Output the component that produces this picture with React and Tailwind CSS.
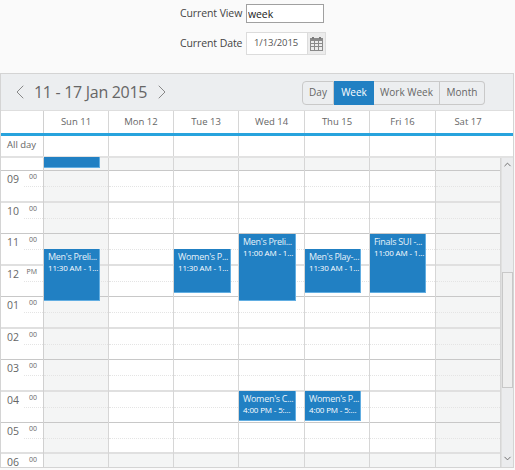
import { ChevronLeft, ChevronRight, ChevronUp, ChevronDown } from 'lucide-react';

const days = ['Sun 11', 'Mon 12', 'Tue 13', 'Wed 14', 'Thu 15', 'Fri 16', 'Sat 17'];
const dayWidths = ['w-[65px]', 'w-[65px]', 'w-[65px]', 'w-[66px]', 'w-[65px]', 'w-[66px]', 'w-[65px]'];

// hour rows below the partial first one; thick = the lighter double line at the bottom
const hours = [
  { label: '09', min: '00', h: 'h-[32px]', thick: true },
  { label: '10', min: '00', h: 'h-[31px]', thick: false },
  { label: '11', min: '00', h: 'h-[32px]', thick: true },
  { label: '12', min: 'PM', h: 'h-[31px]', thick: false },
  { label: '01', min: '00', h: 'h-[32px]', thick: true },
  { label: '02', min: '00', h: 'h-[31px]', thick: false },
  { label: '03', min: '00', h: 'h-[32px]', thick: true },
  { label: '04', min: '00', h: 'h-[31px]', thick: false },
  { label: '05', min: '00', h: 'h-[31px]', thick: true },
];

const events = {
  0: [
    { title: 'Men\'s Preli...', time: '11:30 AM - 1...', pos: 'top-[91px] h-[52px] left-0 w-[56px]' },
    { title: '', time: '', pos: 'top-[-1px] h-[11px] left-0 w-[56px]' },
  ],
  2: [{ title: 'Women\'s P...', time: '11:30 AM - 1...', pos: 'top-[91px] h-[44px] left-0 w-[57px]' }],
  3: [
    { title: 'Men\'s Preli...', time: '11:00 AM - 1...', pos: 'top-[76px] h-[67px] left-0 w-[57px]' },
    { title: 'Women\'s C...', time: '4:00 PM - 5:...', pos: 'top-[233px] h-[30px] left-0 w-[57px]' },
  ],
  4: [
    { title: 'Men\'s Play-...', time: '11:30 AM - 1...', pos: 'top-[91px] h-[44px] left-0 w-[56px]' },
    { title: 'Women\'s P...', time: '4:00 PM - 5:...', pos: 'top-[233px] h-[30px] left-0 w-[56px]' },
  ],
  5: [{ title: 'Finals SUI -...', time: '11:00 AM - 1...', pos: 'top-[76px] h-[59px] left-0 w-[56px]' }],
};

function Event({ title, time, pos }) {
  return (
    <div className={`absolute ${pos} bg-[#2180c3] border-r border-b border-[#62aee2] pl-[4px] pt-[2px] text-white overflow-hidden whitespace-nowrap`}>
      {title && <div className="text-[9px] leading-[12px] tracking-[-0.3px] text-[#e6f2fa]">{title}</div>}
      {time && <div className="mt-[-1px] text-[8px] leading-[12px] tracking-[-0.15px]">{time}</div>}
    </div>
  );
}

function CalendarIcon() {
  return (
    <svg width="13" height="14" viewBox="0 0 13 14" fill="#7b7b7b">
      <rect x="0" y="1" width="13" height="13" fill="#8a8a8a" />
      <rect x="2" y="0" width="2" height="2" />
      <rect x="9" y="0" width="2" height="2" />
      <g fill="#ececec">
        <rect x="1" y="4" width="3" height="2" />
        <rect x="5" y="4" width="3" height="2" />
        <rect x="9" y="4" width="3" height="2" />
        <rect x="1" y="7" width="3" height="2" />
        <rect x="5" y="7" width="3" height="2" />
        <rect x="9" y="7" width="3" height="2" />
        <rect x="1" y="10" width="3" height="3" />
        <rect x="5" y="10" width="3" height="3" />
        <rect x="9" y="10" width="3" height="3" />
      </g>
    </svg>
  );
}

export default function App() {
  return (
    <div className="w-[515px] h-[470px] bg-[#fafafa] overflow-hidden text-[#555] font-['Open_Sans',sans-serif]">
      {/* options above the scheduler */}
      <div className="h-[73px] pl-[180px] pt-[4px] text-[10.5px] tracking-[-0.1px] text-[#444]">
        <div className="flex items-center h-[19px]">
          <span className="w-[66px] whitespace-nowrap">Current View</span>
          <input
            readOnly
            value="week"
            className="w-[78px] h-[19px] bg-white border border-[#a0a0a0] px-[1px] text-[10.5px] text-[#222] outline-none"
          />
        </div>
        <div className="flex items-center h-[23px] mt-[9px]">
          <span className="w-[66px] whitespace-nowrap">Current Date</span>
          <div className="flex h-[23px] border border-[#dcdcdc] bg-white">
            <span className="w-[60px] flex items-center pl-[7px] text-[#555] text-[9.5px]">1/13/2015</span>
            <span className="w-[18px] bg-[#ececec] border-l border-[#dcdcdc] flex items-center justify-center">
              <CalendarIcon />
            </span>
          </div>
        </div>
      </div>

      <div className="w-[514px] h-[395px] border border-[#d4d4d4] bg-white overflow-hidden">
        {/* toolbar */}
        <div className="h-[37px] bg-[#eceef0] border-b border-[#dedede] flex items-center justify-between pl-[7px] pr-[28px]">
          <div className="flex items-center text-[#666]">
            <ChevronLeft size={24} strokeWidth={1} className="text-[#888]" />
            <span className="ml-[2px] text-[16px] leading-none tracking-[-0.3px] whitespace-nowrap">11 - 17 Jan 2015</span>
            <ChevronRight size={24} strokeWidth={1} className="ml-[3px] text-[#888]" />
          </div>
          <div className="flex h-[24px] text-[10px] text-[#666] mt-[1px]">
            <span className="w-[32px] flex items-center justify-center border border-[#c9c9c9] rounded-l-[4px]">Day</span>
            <span className="w-[40px] flex items-center justify-center bg-[#2180c3] text-white">Week</span>
            <span className="w-[66px] flex items-center justify-center border-y border-r border-[#c9c9c9]">Work Week</span>
            <span className="w-[45px] flex items-center justify-center border-y border-r border-[#c9c9c9] rounded-r-[4px]">Month</span>
          </div>
        </div>

        {/* day header */}
        <div className="flex h-[25px] border-b-[3px] border-[#28a3dd]">
          <div className="w-[43px] border-r border-[#d0d0d0]" />
          {days.map((d, i) => (
            <div key={d} className={`${i === 6 ? 'flex-1' : `${dayWidths[i]} border-r border-[#d6d6d6]`} flex items-center justify-center text-[9.5px] text-[#666]`}>
              <span className={i === 6 ? 'mr-[13px]' : ''}>{d}</span>
            </div>
          ))}
        </div>

        {/* all day row */}
        <div className="flex h-[22px] border-b-2 border-[#e2e2e2]">
          <div className="w-[43px] border-r border-[#d0d0d0] pl-[6px] text-[9.5px] leading-[17px] text-[#666]">All day</div>
          {days.map((d, i) => (
            <div key={d} className={i === 6 ? 'flex-1' : `${dayWidths[i]} border-r border-[#d6d6d6]`} />
          ))}
        </div>

        <div className="flex">
          {/* time ruler */}
          <div className="w-[43px] border-r border-[#d0d0d0] shrink-0">
            <div className="h-[13px] border-b border-[#c8c8c8]" />
            {hours.map((r) => (
              <div key={r.label} className={`${r.h} relative ${r.thick ? 'border-b-2 border-[#e0e0e0]' : 'border-b border-[#c8c8c8]'}`}>
                <span className="absolute left-[6px] top-[1px] text-[10.5px] leading-[14px] text-[#666]">{r.label}</span>
                <span className="absolute right-[6px] top-[1px] text-[7px] leading-[10px] text-[#666]">{r.min}</span>
                <div className="absolute left-[23px] right-0 top-[15px] border-t border-dotted border-[#e4e4e4]" />
              </div>
            ))}
            <div className="relative h-[13px]">
              <span className="absolute left-[6px] top-[1px] text-[10.5px] leading-[14px] text-[#666]">06</span>
              <span className="absolute right-[6px] top-[1px] text-[7px] leading-[10px] text-[#666]">00</span>
            </div>
          </div>

          {/* day columns */}
          {days.map((d, i) => {
            const weekend = i === 0 || i === 6;
            const bg = weekend ? 'bg-[#f4f5f5]' : 'bg-white';
            return (
              <div key={d} className={`${dayWidths[i]} relative border-r border-[#d6d6d6] shrink-0`}>
                <div className="h-[13px] bg-[#f4f5f5] border-b border-[#c8c8c8]" />
                {hours.map((r) => (
                  <div key={r.label} className={`${r.h} ${bg} relative ${r.thick ? 'border-b-2 border-[#e0e0e0]' : 'border-b border-[#c8c8c8]'}`}>
                    <div className="absolute left-0 right-0 top-[15px] border-t border-dotted border-[#e4e4e4]" />
                  </div>
                ))}
                <div className="h-[13px] bg-[#f4f5f5]" />
                {(events[i] || []).map((e) => (
                  <Event key={e.pos} {...e} />
                ))}
              </div>
            );
          })}

          {/* scrollbar */}
          <div className="relative flex-1 bg-[#ebecee] border-l border-[#e0e0e0]">
            <ChevronUp size={11} strokeWidth={2} className="absolute left-0 top-[1px] text-[#666]" />
            <div className="absolute left-0 right-0 top-[114px] h-[116px] bg-[#eeeeee] border border-[#c8c8c8]" />
            <ChevronDown size={11} strokeWidth={2} className="absolute left-0 bottom-[3px] text-[#666]" />
          </div>
        </div>
      </div>
    </div>
  );
}
